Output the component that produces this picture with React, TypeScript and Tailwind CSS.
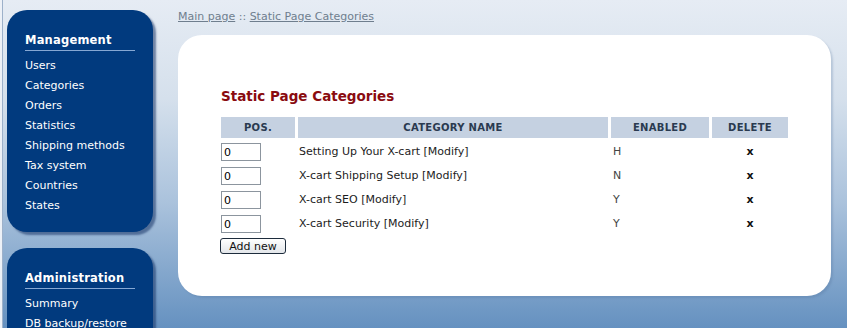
import React from "react";

const management = ["Users", "Categories", "Orders", "Statistics", "Shipping methods", "Tax system", "Countries", "States"];
const administration = ["Summary", "DB backup/restore"];

const rows = [
  { name: "Setting Up Your X-cart", enabled: "H" },
  { name: "X-cart Shipping Setup", enabled: "N" },
  { name: "X-cart SEO", enabled: "Y" },
  { name: "X-cart Security", enabled: "Y" },
];

function MenuBox({ title, items }: { title: string; items: string[] }) {
  return (
    <div className="bg-[#013a7e] rounded-[20px] pt-[22px] pb-[16px] pl-[18px] pr-[12px] shadow-[3px_3px_2px_rgba(20,50,100,0.55)]">
      <div className="text-[11.5px] leading-[16px] font-bold text-white pb-[2px] border-b border-[#86a8d4] w-[110px] tracking-[0.2px]">{title}</div>
      <ul className="mt-[5px]">
        {items.map((it) => (
          <li key={it} className="text-[11px] leading-[20px] text-white whitespace-nowrap">
            {it}
          </li>
        ))}
      </ul>
    </div>
  );
}

export default function App() {
  return (
    <div
      className="w-[847px] h-[328px] overflow-hidden flex bg-[linear-gradient(to_bottom,#e6ecf4_0%,#d5e0ec_30%,#aac2dc_62%,#6591c0_100%)]"
      style={{ fontFamily: '"DejaVu Sans", Verdana, sans-serif' }}
    >
      {/* left edge strip */}
      <div className="w-[2px] shrink-0 bg-[#edf1f7]" />
      <div className="w-[1px] shrink-0 bg-[#9db1ca]" />

      {/* Sidebar */}
      <div className="w-[146px] shrink-0 ml-[4px] mt-[10px] flex flex-col gap-[16px]">
        <MenuBox title="Management" items={management} />
        <MenuBox title="Administration" items={administration} />
      </div>

      {/* Main */}
      <div className="ml-[25px] w-[653px] shrink-0">
        <div className="pt-[10px] h-[35px] text-[11px] leading-[14px] text-[#6f7e8e]">
          <span className="underline">Main page</span>
          <span> :: </span>
          <span className="underline">Static Page Categories</span>
        </div>

        <div className="bg-white rounded-[24px] h-[261px] pl-[43px] pt-[53px] shadow-[2px_2px_2px_rgba(80,110,150,0.25)]">
          <h1 className="text-[13.5px] leading-[17px] font-bold text-[#8a0b10] mb-[12px]">Static Page Categories</h1>

          <div className="grid grid-cols-[74px_310px_98px_76px] gap-x-[3px] w-[567px]">
            {["POS.", "CATEGORY NAME", "ENABLED", "DELETE"].map((h) => (
              <div key={h} className="bg-[#c5d1e1] h-[21px] flex items-center justify-center text-[10px] font-bold text-[#2a3a50] tracking-[0.3px]">
                {h}
              </div>
            ))}
          </div>

          <div className="mt-[5px] w-[567px] flex flex-col items-start">
            {rows.map((r) => (
              <div key={r.name} className="grid grid-cols-[74px_310px_98px_76px] gap-x-[3px] h-[24px] w-full">
                <div className="flex items-start">
                  <input
                    defaultValue="0"
                    className="w-[40px] h-[18px] border border-[#8c959e] text-[11px] leading-[14px] pl-[2px] text-black bg-white outline-none"
                    style={{ fontFamily: '"DejaVu Sans", Verdana, sans-serif' }}
                  />
                </div>
                <div className="text-[11px] leading-[18px] text-[#1c1c1c] pl-[1px] whitespace-nowrap">
                  {r.name} [Modify]
                </div>
                <div className="text-[11px] leading-[18px] text-[#444] pl-[2px]">{r.enabled}</div>
                <div className="text-[11px] leading-[18px] font-bold text-[#111] text-center">x</div>
              </div>
            ))}
            <button
              className="block -ml-[1px] -mt-[1px] h-[16px] w-[66px] rounded-[3px] border border-[#1d2c3c] bg-[linear-gradient(to_bottom,#ffffff,#e3e6ea)] text-[11px] leading-[13px] text-[#111]"
              style={{ fontFamily: '"DejaVu Sans", Verdana, sans-serif' }}
            >
              Add new
            </button>
          </div>
        </div>
      </div>
    </div>
  );
}
